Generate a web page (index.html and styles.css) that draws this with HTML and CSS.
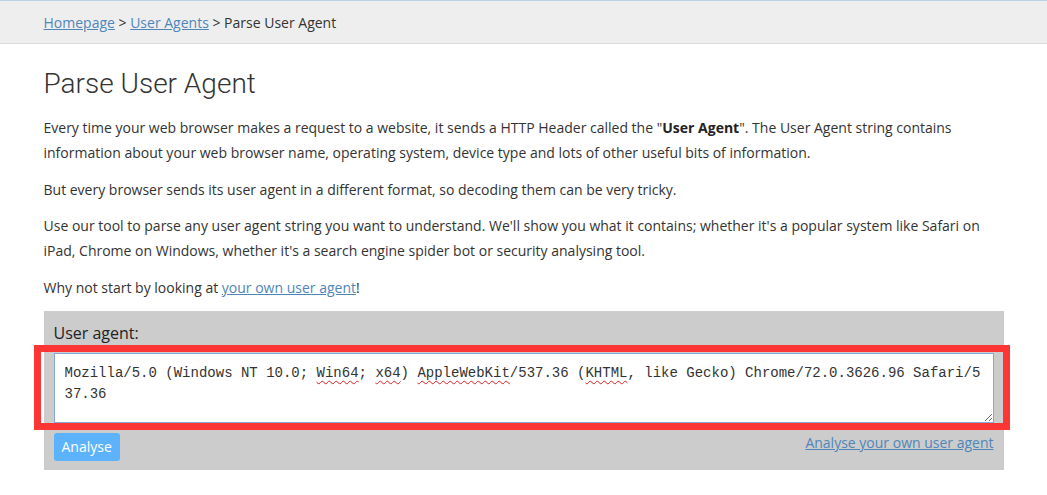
FILE: index.html
```html
<!DOCTYPE html>
<html lang="en">
<head>
<meta charset="utf-8">
<title>Parse User Agent</title>
<link rel="stylesheet" href="styles.css">
</head>
<body>
<nav class="crumbs">
  <div class="container">
    <a href="#">Homepage</a> &gt; <a href="#">User Agents</a> &gt; Parse User Agent
  </div>
</nav>
<main class="container">
  <h1 class="title">Parse User Agent</h1>
  <p>Every time your web browser makes a request to a website, it sends a HTTP Header called the "<b>User Agent</b>". The User Agent string contains information about your web browser name, operating system, device type and lots of other useful bits of information.</p>
  <p>But every browser sends its user agent in a different format, so decoding them can be very tricky.</p>
  <p>Use our tool to parse any user agent string you want to understand. We'll show you what it contains; whether it's a popular system like Safari on iPad, Chrome on Windows, whether it's a search engine spider bot or security analysing tool.</p>
  <p>Why not start by looking at <a href="#">your own user agent</a>!</p>
  <form class="ua-box">
    <label class="ua-label">User agent:</label>
    <div class="ua-input">Mozilla/5.0 (Windows NT 10.0; <span class="sp">Win64</span>; <span class="sp">x64</span>) <span class="sp">AppleWebKit</span>/537.36 (<span class="sp">KHTML</span>, like Gecko) Chrome/72.0.3626.96 Safari/537.36</div>
    <div class="ua-actions">
      <button type="button" class="btn">Analyse</button>
      <a href="#" class="own-link">Analyse your own user agent</a>
    </div>
    <div class="highlight"></div>
  </form>
</main>
</body>
</html>
```
FILE: styles.css
```css
html, body {
  margin: 0;
  padding: 0;
  background: #fff;
}
body {
  font-family: "Open Sans", "Liberation Sans", sans-serif;
  font-size: 14px;
  color: #333;
}
a {
  color: #4f86b9;
  text-decoration: underline;
}
.container {
  width: 960px;
  margin: 0 auto;
}
.crumbs {
  background: #eeeeee;
  border-top: 1px solid #b9d3e6;
  border-bottom: 1px solid #dcdcdc;
  padding: 12px 0 10px;
  line-height: 20px;
  color: #333;
}
.crumbs a {
  color: #4f86b9;
}
.title {
  font-family: Roboto, "Open Sans", sans-serif;
  font-weight: 300;
  font-size: 28px;
  line-height: 34px;
  color: #333;
  margin: 23px 0 14px;
}
p {
  margin: 0 0 11.5px;
  line-height: 25px;
}
p b {
  font-weight: 700;
  color: #222;
}
.ua-box {
  position: relative;
  background: #cccccc;
  padding: 11px 10px 9px;
  margin: 3px 0 0;
}
.ua-label {
  display: block;
  font-size: 16px;
  line-height: 22px;
  color: #222;
  margin-bottom: 9px;
}
.ua-input {
  box-sizing: border-box;
  width: 940px;
  height: 70px;
  background: #fff;
  border: 1px solid #86a7da;
  padding: 9px 10px;
  font-family: "Liberation Mono", "Courier New", monospace;
  font-size: 14px;
  line-height: 21px;
  color: #333;
  white-space: pre-wrap;
  overflow-wrap: break-word;
  word-break: break-all;
  overflow: auto;
  resize: vertical;
}
.sp {
  text-decoration: underline wavy #e02020;
  text-decoration-thickness: 1px;
  text-underline-offset: 3px;
}
.ua-actions {
  display: flex;
  justify-content: space-between;
  align-items: flex-start;
  margin-top: 10px;
}
.btn {
  height: 28px;
  padding: 0 8px;
  margin: 0;
  border: 0;
  border-radius: 3px;
  background: #5cb3fc;
  color: #fff;
  font-family: "Open Sans", "Liberation Sans", sans-serif;
  font-size: 14px;
  line-height: 28px;
  cursor: pointer;
}
.own-link {
  line-height: 20px;
  font-size: 14px;
  color: #4f86b9;
}
.highlight {
  position: absolute;
  left: -10px;
  top: 34px;
  width: 976px;
  height: 85px;
  box-sizing: border-box;
  border: 7px solid #fc3535;
  pointer-events: none;
}
```
